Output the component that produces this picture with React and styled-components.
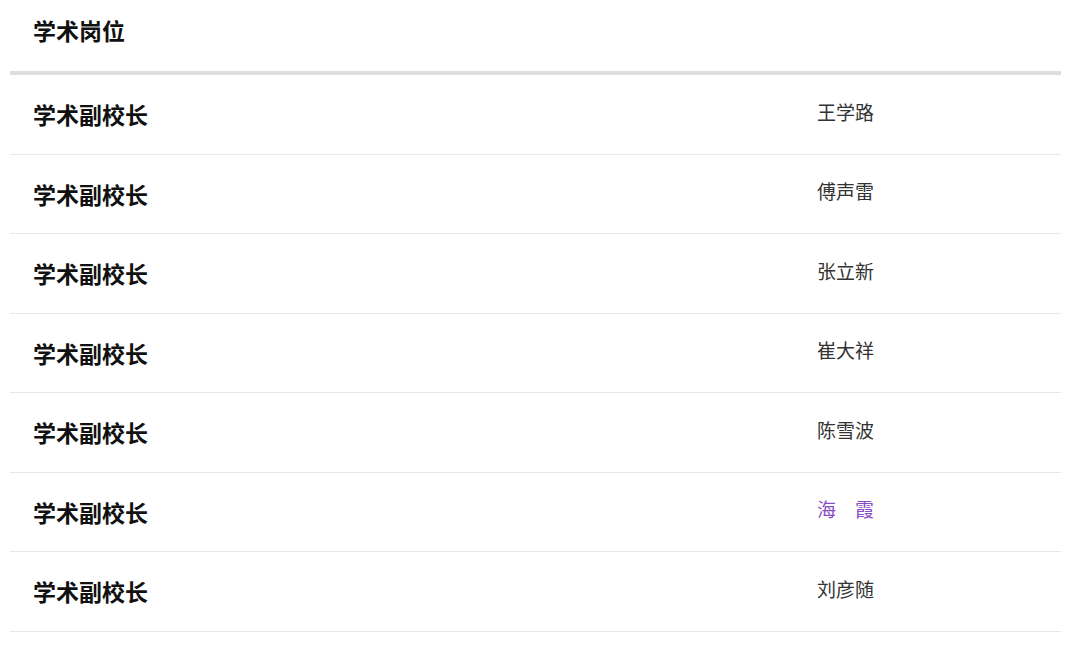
import styled, { createGlobalStyle } from 'styled-components';

const GlobalStyle = createGlobalStyle`
    html, body {
        margin: 0;
        padding: 0;
        background: #fff;
        font-family: "Noto Sans CJK SC", "Noto Sans", sans-serif;
    }
`;

const Table = styled.div`
    width: 1051px;
    margin-left: 10px;
`;

const Header = styled.div`
    height: 75px;
    display: flex;
    align-items: center;
    padding: 0 23px 12px;
    box-sizing: border-box;
    border-bottom: 4px solid #dedede;
`;

const HeaderTitle = styled.span`
    font-size: 23px;
    font-weight: 700;
    color: #111;
`;

const Row = styled.div`
    height: 79.5px;
    box-sizing: border-box;
    display: grid;
    grid-template-columns: 784px 1fr;
    align-items: center;
    padding-left: 23px;
    border-bottom: 1px solid #e8e8e8;
`;

const Position = styled.span`
    font-size: 23px;
    font-weight: 700;
    color: #111;
`;

const Name = styled.span`
    font-size: 19px;
    color: ${(p) => (p.$highlight ? '#8a4cc4' : '#333')};
    padding-bottom: 6px;
`;

const rows = [
    { name: '王学路' },
    { name: '傅声雷' },
    { name: '张立新' },
    { name: '崔大祥' },
    { name: '陈雪波' },
    { name: '海　霞', highlight: true },
    { name: '刘彦随' },
];

export default function App() {
    return (
        <>
            <GlobalStyle />
            <Table>
                <Header>
                    <HeaderTitle>学术岗位</HeaderTitle>
                </Header>
                {rows.map((r, i) => (
                    <Row key={i}>
                        <Position>学术副校长</Position>
                        <Name $highlight={r.highlight}>{r.name}</Name>
                    </Row>
                ))}
            </Table>
        </>
    );
}
